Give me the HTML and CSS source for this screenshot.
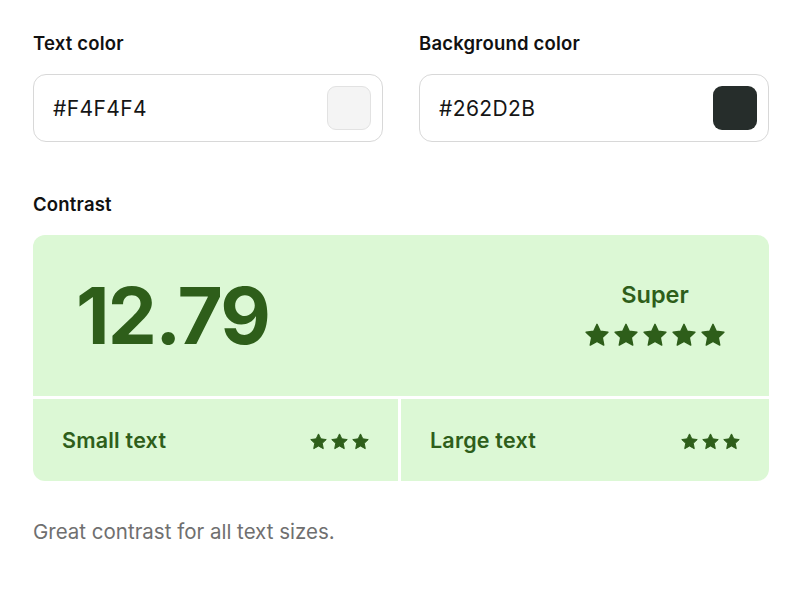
FILE: index.html
```html
<html>
<head>
	<meta charset="utf-8" />
	<title>contrast checker</title>
	<link rel="stylesheet" href="styles.css">
</head>

<body>
	<div id="wrapper">
		<div class="pickers">
			<div class="picker">
				<label class="label">Text color</label>
				<div class="color-input">
					<span class="hex">#F4F4F4</span>
					<span class="swatch light"></span>
				</div>
			</div>
			<div class="picker">
				<label class="label">Background color</label>
				<div class="color-input">
					<span class="hex">#262D2B</span>
					<span class="swatch dark"></span>
				</div>
			</div>
		</div>

		<div class="label contrast-label">Contrast</div>
		<div class="result">
			<div class="result-main">
				<span class="ratio">12.79</span>
				<div class="rating">
					<span class="rating-name">Super</span>
					<div class="stars big">
						<svg viewBox="0 0 24 24"><path d="M12 1.3L15.29 8.27 22.94 9.25 17.33 14.53 18.76 22.1 12 18.4 5.24 22.1 6.67 14.53 1.06 9.25 8.71 8.27Z" /></svg>
						<svg viewBox="0 0 24 24"><path d="M12 1.3L15.29 8.27 22.94 9.25 17.33 14.53 18.76 22.1 12 18.4 5.24 22.1 6.67 14.53 1.06 9.25 8.71 8.27Z" /></svg>
						<svg viewBox="0 0 24 24"><path d="M12 1.3L15.29 8.27 22.94 9.25 17.33 14.53 18.76 22.1 12 18.4 5.24 22.1 6.67 14.53 1.06 9.25 8.71 8.27Z" /></svg>
						<svg viewBox="0 0 24 24"><path d="M12 1.3L15.29 8.27 22.94 9.25 17.33 14.53 18.76 22.1 12 18.4 5.24 22.1 6.67 14.53 1.06 9.25 8.71 8.27Z" /></svg>
						<svg viewBox="0 0 24 24"><path d="M12 1.3L15.29 8.27 22.94 9.25 17.33 14.53 18.76 22.1 12 18.4 5.24 22.1 6.67 14.53 1.06 9.25 8.71 8.27Z" /></svg>
					</div>
				</div>
			</div>
			<div class="result-size">
				<span class="size-name">Small text</span>
				<div class="stars small">
					<svg viewBox="0 0 24 24"><path d="M12 1.3L15.29 8.27 22.94 9.25 17.33 14.53 18.76 22.1 12 18.4 5.24 22.1 6.67 14.53 1.06 9.25 8.71 8.27Z" /></svg>
					<svg viewBox="0 0 24 24"><path d="M12 1.3L15.29 8.27 22.94 9.25 17.33 14.53 18.76 22.1 12 18.4 5.24 22.1 6.67 14.53 1.06 9.25 8.71 8.27Z" /></svg>
					<svg viewBox="0 0 24 24"><path d="M12 1.3L15.29 8.27 22.94 9.25 17.33 14.53 18.76 22.1 12 18.4 5.24 22.1 6.67 14.53 1.06 9.25 8.71 8.27Z" /></svg>
				</div>
			</div>
			<div class="result-size">
				<span class="size-name">Large text</span>
				<div class="stars small">
					<svg viewBox="0 0 24 24"><path d="M12 1.3L15.29 8.27 22.94 9.25 17.33 14.53 18.76 22.1 12 18.4 5.24 22.1 6.67 14.53 1.06 9.25 8.71 8.27Z" /></svg>
					<svg viewBox="0 0 24 24"><path d="M12 1.3L15.29 8.27 22.94 9.25 17.33 14.53 18.76 22.1 12 18.4 5.24 22.1 6.67 14.53 1.06 9.25 8.71 8.27Z" /></svg>
					<svg viewBox="0 0 24 24"><path d="M12 1.3L15.29 8.27 22.94 9.25 17.33 14.53 18.76 22.1 12 18.4 5.24 22.1 6.67 14.53 1.06 9.25 8.71 8.27Z" /></svg>
				</div>
			</div>
		</div>

		<p class="summary">Great contrast for all text sizes.</p>
	</div>
</body>
</html>
```

FILE: styles.css
```css
:root {
	--green-bg: #dcf8d5;
	--green-text: #2e5e1a;
	--border: #d8d8d8;
}

body {
	margin: 0;
	background-color: white;
	font-family: Inter, "Noto Sans", sans-serif;
	color: #111;
}

#wrapper {
	width: 736px;
	padding: 31px 31px 0 33px;
}

.pickers {
	display: grid;
	grid-template-columns: 350px 350px;
	column-gap: 36px;
}

.label {
	display: block;
	font-size: 18.5px;
	font-weight: 600;
	line-height: 24px;
	letter-spacing: 0.2px;
}

.color-input {
	display: flex;
	align-items: center;
	justify-content: space-between;
	box-sizing: border-box;
	height: 68px;
	margin-top: 19px;
	padding: 0 11px 0 19px;
	border: 1.5px solid var(--border);
	border-radius: 13px;
}

.hex {
	font-size: 21px;
	letter-spacing: 0.4px;
	color: #151515;
}

.swatch {
	width: 44px;
	height: 44px;
	box-sizing: border-box;
	border-radius: 9px;
}

.swatch.light {
	background-color: #f4f4f4;
	border: 1px solid #e2e2e2;
}

.swatch.dark {
	background-color: #262d2b;
}

.contrast-label {
	margin-top: 50px;
}

.result {
	display: grid;
	grid-template-columns: 365px 1fr;
	gap: 3px;
	margin-top: 19px;
	border-radius: 12px;
	overflow: hidden;
}

.result-main {
	grid-column: span 2;
	display: flex;
	align-items: center;
	justify-content: space-between;
	height: 161px;
	padding: 0 44px 0 43px;
	background-color: var(--green-bg);
	color: var(--green-text);
}

.ratio {
	font-size: 78px;
	font-weight: 700;
	letter-spacing: -1.8px;
}

.rating {
	display: flex;
	flex-direction: column;
	align-items: center;
}

.rating-name {
	font-size: 23.5px;
	font-weight: 600;
	line-height: 28px;
	margin-top: -4px;
}

.stars {
	display: flex;
	fill: var(--green-text);
	stroke: var(--green-text);
	stroke-width: 1.4px;
	stroke-linejoin: round;
}

.stars.big {
	gap: 5px;
	margin-top: 14px;
}

.stars.big svg {
	width: 24px;
	height: 24px;
}

.stars.small {
	gap: 4px;
	margin-top: 3px;
}

.stars.small svg {
	width: 17px;
	height: 17px;
}

.result-size {
	display: flex;
	align-items: center;
	justify-content: space-between;
	height: 82px;
	padding: 0 29px 0 29px;
	background-color: var(--green-bg);
	color: var(--green-text);
}

.size-name {
	font-size: 21.5px;
	font-weight: 600;
	letter-spacing: 0.2px;
}

.summary {
	margin: 38px 0 0;
	font-size: 20.5px;
	color: #6f6f6f;
}
```
